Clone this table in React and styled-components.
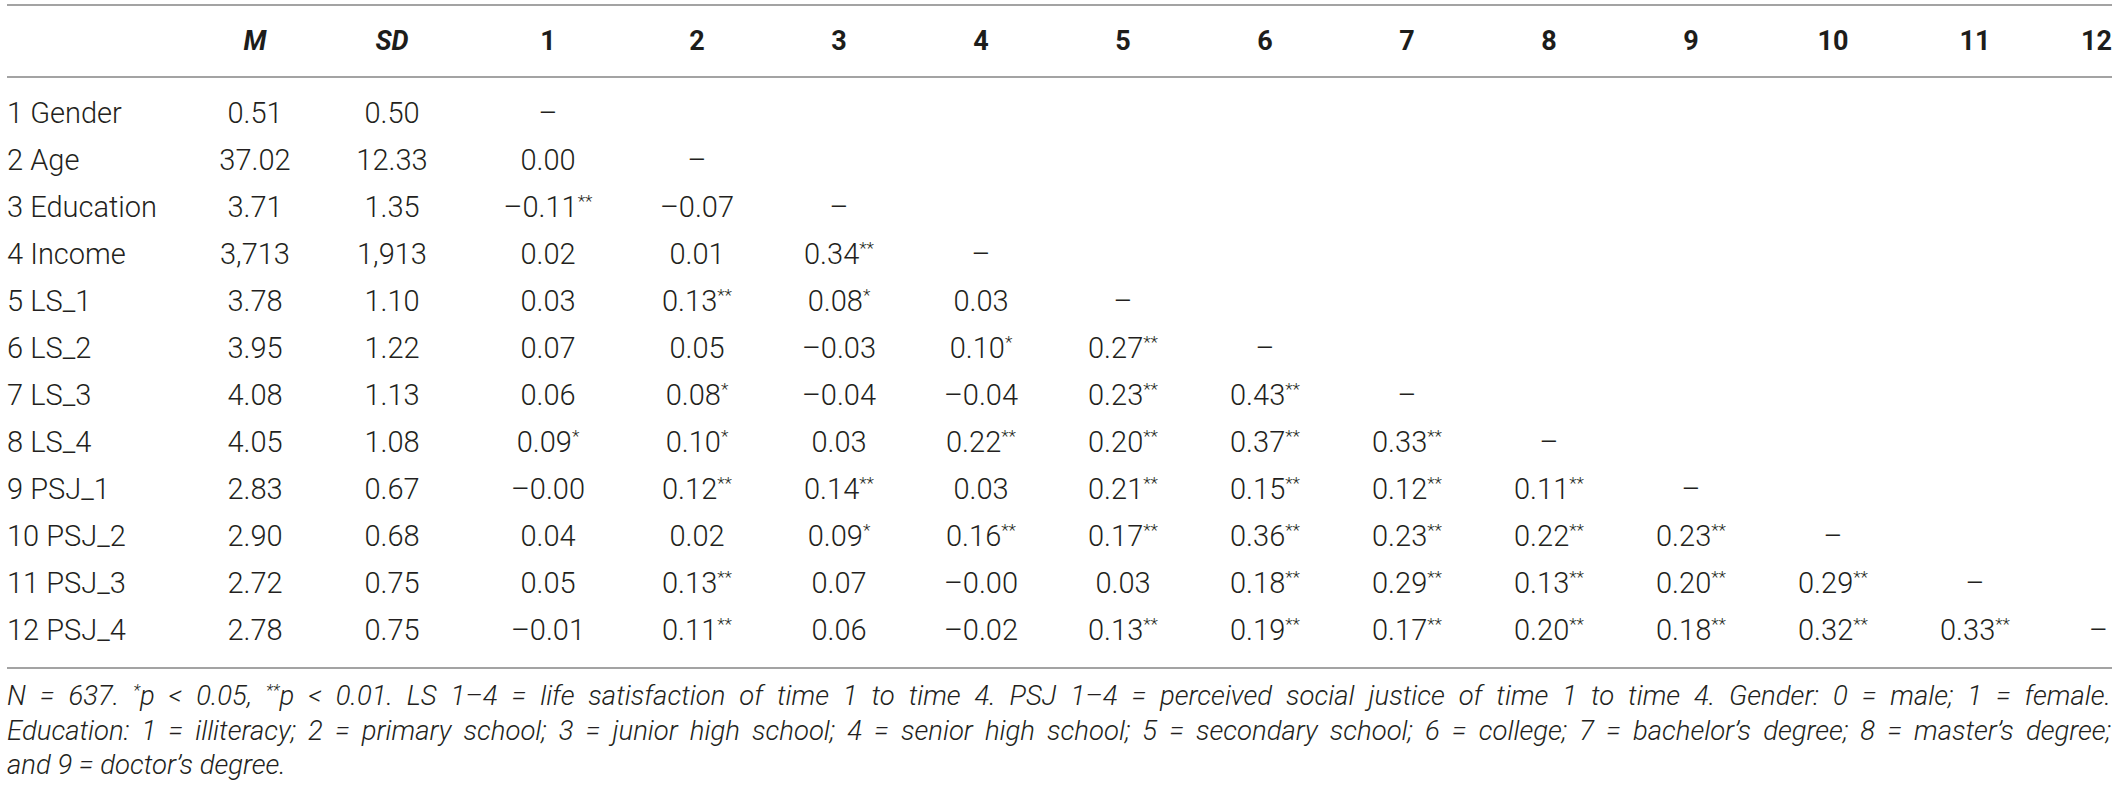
import React from "react";
import styled, { createGlobalStyle } from "styled-components";

const Global = createGlobalStyle`
  html, body {
    margin: 0;
    padding: 0;
    background: #ffffff;
  }
`;

const Page = styled.div`
  width: 2118px;
  height: 792px;
  padding: 4px 0 0 7px;
  box-sizing: border-box;
  font-family: Roboto, "Liberation Sans", Arial, sans-serif;
  color: #231f20;
  overflow: hidden;
`;

const Table = styled.table`
  width: 2105px;
  table-layout: fixed;
  border-collapse: collapse;
  border-top: 2px solid #a3a3a3;
  border-bottom: 2px solid #a3a3a3;
`;

const Col = styled.col`
  width: ${(p) => p.$w}px;
`;

const Head = styled.thead`
  border-bottom: 2px solid #a3a3a3;
`;

const HeadCell = styled.th`
  height: 70px;
  padding: 0;
  font-size: 27px;
  font-weight: 700;
  font-style: ${(p) => (p.$italic ? "italic" : "normal")};
  text-align: ${(p) => (p.$right ? "right" : "center")};
  color: #1d1d1b;
`;

const Body = styled.tbody`
  tr:first-child td {
    padding-top: 12px;
  }
  tr:last-child td {
    padding-bottom: 13px;
  }
`;

const Cell = styled.td`
  height: 47px;
  padding: 0;
  font-size: 29px;
  font-weight: 300;
  line-height: 47px;
  white-space: nowrap;
  text-align: ${(p) => (p.$label ? "left" : p.$right ? "right" : "center")};
  padding-right: ${(p) => (p.$right ? "4px" : "0")};
`;

const Sup = styled.span`
  font-size: 0.6em;
  vertical-align: 0.55em;
  line-height: 0;
`;

const Note = styled.div`
  margin-top: 10px;
  width: 2104px;
  font-size: 27.5px;
  font-style: italic;
  font-weight: 300;
  line-height: 34.5px;
`;

const NoteLine = styled.div`
  white-space: nowrap;
  text-align: ${(p) => (p.$justify ? "justify" : "left")};
  text-align-last: ${(p) => (p.$justify ? "justify" : "left")};
`;

const widths = [189, 118, 156, 156, 142, 142, 142, 142, 142, 142, 142, 142, 142, 142, 66];

const rows = [
  ["1 Gender", "0.51", "0.50", "–"],
  ["2 Age", "37.02", "12.33", "0.00", "–"],
  ["3 Education", "3.71", "1.35", "–0.11**", "–0.07", "–"],
  ["4 Income", "3,713", "1,913", "0.02", "0.01", "0.34**", "–"],
  ["5 LS_1", "3.78", "1.10", "0.03", "0.13**", "0.08*", "0.03", "–"],
  ["6 LS_2", "3.95", "1.22", "0.07", "0.05", "–0.03", "0.10*", "0.27**", "–"],
  ["7 LS_3", "4.08", "1.13", "0.06", "0.08*", "–0.04", "–0.04", "0.23**", "0.43**", "–"],
  ["8 LS_4", "4.05", "1.08", "0.09*", "0.10*", "0.03", "0.22**", "0.20**", "0.37**", "0.33**", "–"],
  ["9 PSJ_1", "2.83", "0.67", "–0.00", "0.12**", "0.14**", "0.03", "0.21**", "0.15**", "0.12**", "0.11**", "–"],
  ["10 PSJ_2", "2.90", "0.68", "0.04", "0.02", "0.09*", "0.16**", "0.17**", "0.36**", "0.23**", "0.22**", "0.23**", "–"],
  ["11 PSJ_3", "2.72", "0.75", "0.05", "0.13**", "0.07", "–0.00", "0.03", "0.18**", "0.29**", "0.13**", "0.20**", "0.29**", "–"],
  ["12 PSJ_4", "2.78", "0.75", "–0.01", "0.11**", "0.06", "–0.02", "0.13**", "0.19**", "0.17**", "0.20**", "0.18**", "0.32**", "0.33**", "–"],
];

function Value({ text }) {
  const m = text.match(/^(.*?)(\*+)?$/);
  return (
    <>
      {m[1]}
      {m[2] && <Sup>{m[2]}</Sup>}
    </>
  );
}

export default function App() {
  const heads = ["M", "SD", "1", "2", "3", "4", "5", "6", "7", "8", "9", "10", "11", "12"];
  return (
    <Page>
      <Global />
      <Table>
        <colgroup>
          {widths.map((w, i) => (
            <Col key={i} $w={w} />
          ))}
        </colgroup>
        <Head>
          <tr>
            <HeadCell />
            {heads.map((h, i) => (
              <HeadCell key={h} $italic={i < 2} $right={i === heads.length - 1}>
                {h}
              </HeadCell>
            ))}
          </tr>
        </Head>
        <Body>
          {rows.map((r) => (
            <tr key={r[0]}>
              {widths.map((_, i) => (
                <Cell key={i} $label={i === 0} $right={i === widths.length - 1}>
                  {r[i] ? <Value text={r[i]} /> : null}
                </Cell>
              ))}
            </tr>
          ))}
        </Body>
      </Table>
      <Note>
        <NoteLine $justify>
          N = 637. <Sup>*</Sup>p &lt; 0.05, <Sup>**</Sup>p &lt; 0.01. LS 1–4 = life satisfaction of time 1 to time 4. PSJ
          1–4 = perceived social justice of time 1 to time 4. Gender: 0 = male; 1 = female.
        </NoteLine>
        <NoteLine $justify>
          Education: 1 = illiteracy; 2 = primary school; 3 = junior high school; 4 = senior high school; 5 = secondary
          school; 6 = college; 7 = bachelor’s degree; 8 = master’s degree;
        </NoteLine>
        <NoteLine>and 9 = doctor’s degree.</NoteLine>
      </Note>
    </Page>
  );
}
